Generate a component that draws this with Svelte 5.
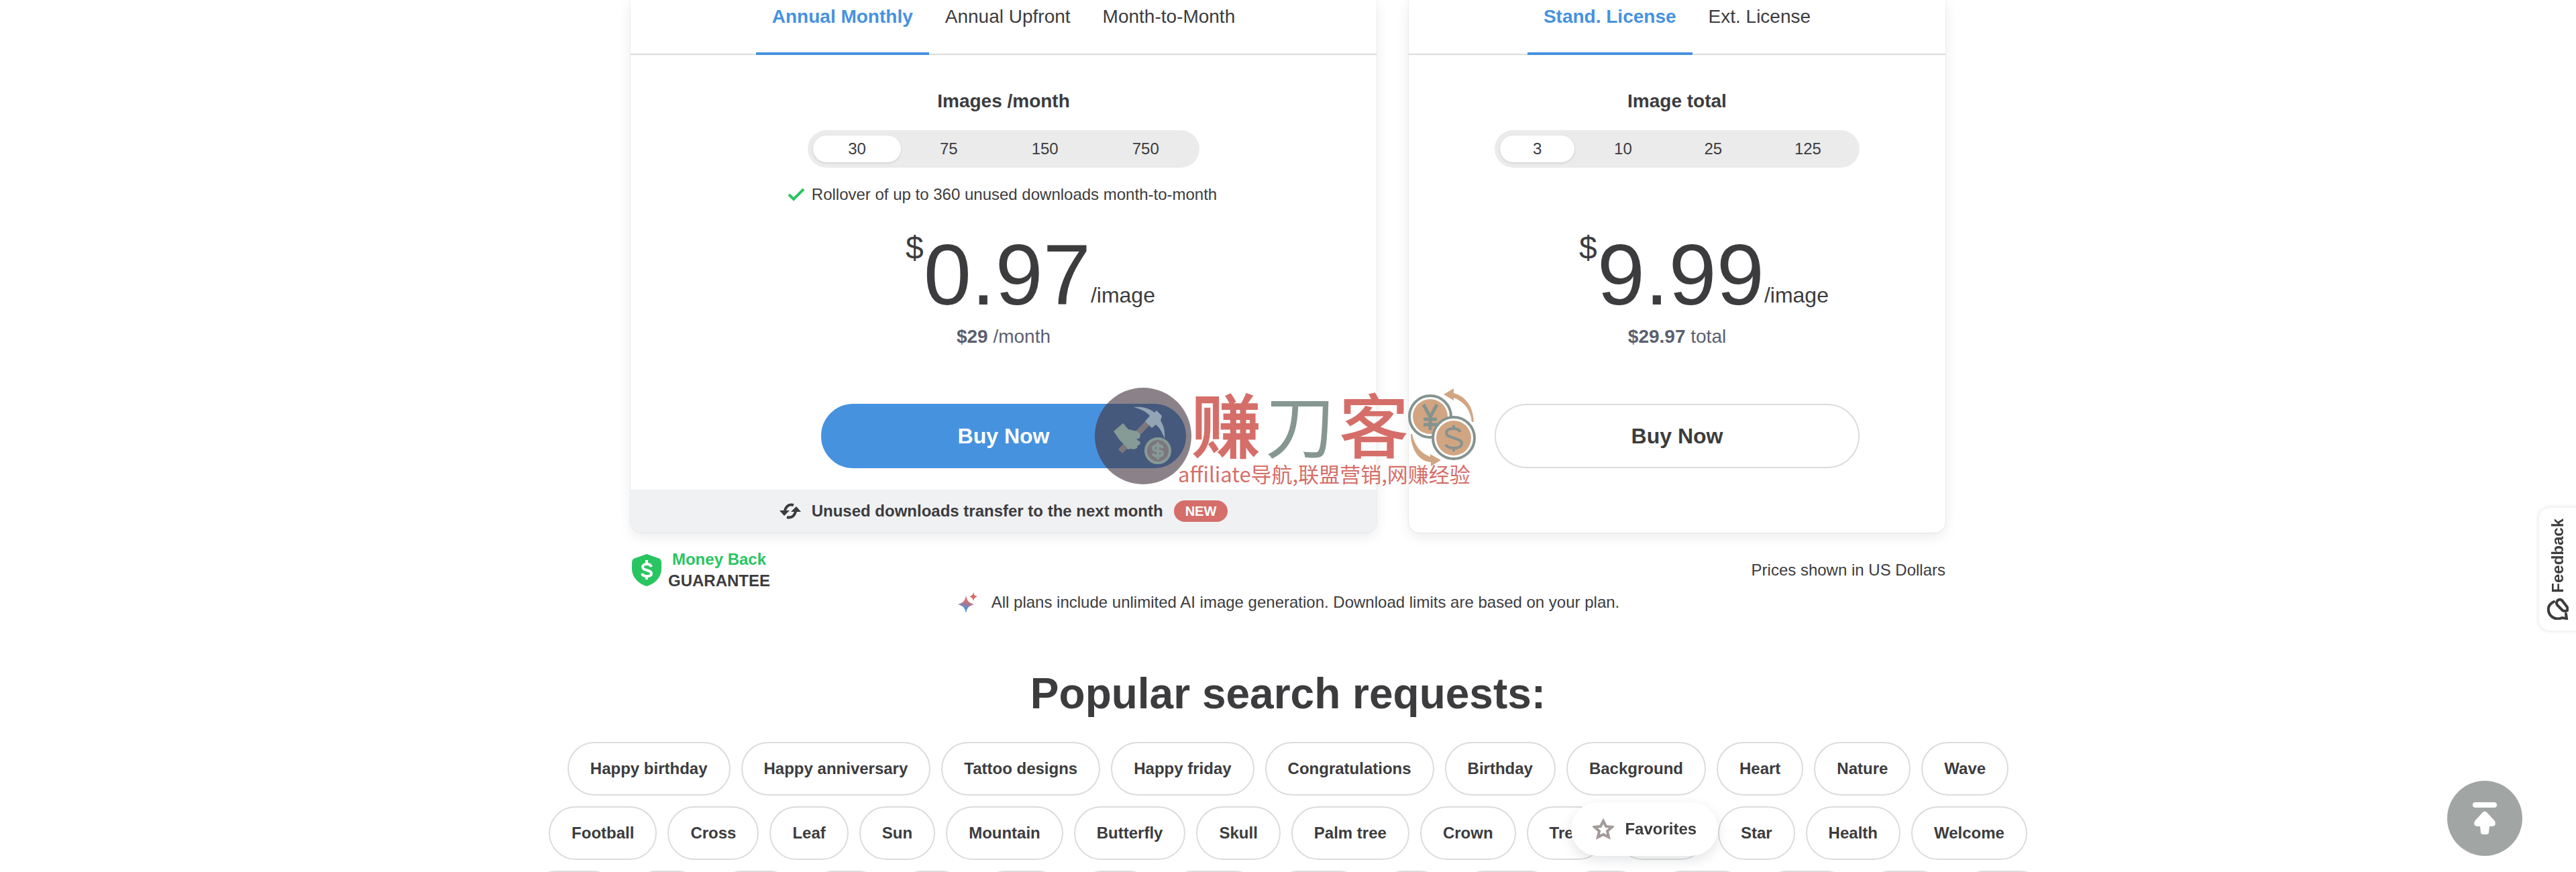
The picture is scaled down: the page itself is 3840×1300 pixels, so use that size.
<script>
  let plans = [
    {
      id: "monthly",
      tabs: ["Annual Monthly", "Annual Upfront", "Month-to-Month"],
      title: "Images /month",
      options: ["30", "75", "150", "750"],
      note: "Rollover of up to 360 unused downloads month-to-month",
      price: "0.97",
      total: "$29",
      totalUnit: "/month",
      transfer: true,
      primary: true,
    },
    {
      id: "license",
      tabs: ["Stand. License", "Ext. License"],
      title: "Image total",
      options: ["3", "10", "25", "125"],
      note: "",
      price: "9.99",
      total: "$29.97",
      totalUnit: "total",
      transfer: false,
      primary: false,
    },
  ];

  let activeTab = { monthly: 0, license: 0 };
  let selected = { monthly: "30", license: "3" };

  // a number is a placeholder chip of that width
  let searches = [
    [
      "Happy birthday",
      "Happy anniversary",
      "Tattoo designs",
      "Happy friday",
      "Congratulations",
      "Birthday",
      "Background",
      "Heart",
      "Nature",
      "Wave",
    ],
    [
      "Football",
      "Cross",
      "Leaf",
      "Sun",
      "Mountain",
      "Butterfly",
      "Skull",
      "Palm tree",
      "Crown",
      "Tree",
      136,
      "Star",
      "Health",
      "Welcome",
    ],
    [134, 111, 121, 116, 108, 128, 120, 141, 140, 105, 147, 116, 140, 138, 124, 133],
  ];

  function scrollTop() {
    window.scrollTo({ top: 0, behavior: "smooth" });
  }
</script>

<main>
  <section class="pricing">
    <div class="plans">
      {#each plans as plan}
        <article class="plan">
          <div class="tabs" role="tablist">
            {#each plan.tabs as tab, i}
              <button
                class="tab"
                class:active={activeTab[plan.id] === i}
                role="tab"
                aria-selected={activeTab[plan.id] === i}
                on:click={() => (activeTab[plan.id] = i)}>{tab}</button
              >
            {/each}
          </div>
          <h3>{plan.title}</h3>
          <div class="segment" class:compact={!plan.primary}>
            {#each plan.options as option}
              <label class:selected={selected[plan.id] === option}>
                <input
                  type="radio"
                  name={plan.id}
                  value={option}
                  bind:group={selected[plan.id]}
                />{option}
              </label>
            {/each}
          </div>
          <div class="note">
            {#if plan.note}
              <svg width="26" height="20" viewBox="0 0 26 20" fill="none">
                <path d="M2 10l7 7L24 2" stroke="#29c561" stroke-width="4" />
              </svg>
              <span>{plan.note}</span>
            {/if}
          </div>
          <div class="price">
            <span class="currency">$</span><span class="amount">{plan.price}</span
            ><span class="unit">/image</span>
          </div>
          <div class="total"><b>{plan.total}</b> {plan.totalUnit}</div>
          <button class="buy" class:primary={plan.primary}>Buy Now</button>
          {#if plan.transfer}
            <div class="transfer">
              <svg width="32" height="24" viewBox="0 0 32 24" fill="none">
                <path
                  d="M21 3C13 1 9 6 8 12M11 21c8 2 12-3 13-9"
                  stroke="#3c3c3e"
                  stroke-width="4"
                />
                <path d="M0 11h15l-8 8zM17 13h15l-7-8z" fill="#3c3c3e" />
              </svg>
              <span>Unused downloads transfer to the next month</span>
              <span class="badge">NEW</span>
            </div>
          {/if}
        </article>
      {/each}
    </div>

    <div class="info">
      <div class="guarantee">
        <svg width="48" height="48" viewBox="0 0 48 48" fill="none">
          <path
            d="M24 0l17 6q5 1 5 7v9c0 12-9 22-22 26C11 44 2 34 2 22v-9q0-6 5-7z"
            fill="#29c561"
          />
          <path
            d="M31 19c-1-3-4-4-7-4-4 0-6 2-6 4 0 3 2 4 6 5s7 2 7 5-3 4-7 4-6-1-7-4M24 9v6M24 33v5"
            stroke="#fff"
            stroke-width="4"
          />
        </svg>
        <div>
          <span class="green">Money Back</span>
          <span>GUARANTEE</span>
        </div>
      </div>
      <span>Prices shown in US Dollars</span>
    </div>
    <p class="ai">
      <svg width="32" height="32" viewBox="0 0 32 32">
        <defs>
          <linearGradient id="spark" x1="0.6" y1="0" x2="0.4" y2="1">
            <stop offset="0.3" stop-color="#d56e6b" />
            <stop offset="0.8" stop-color="#4692df" />
          </linearGradient>
        </defs>
        <path d="M14 6c2 9 4 10 12 13-8 3-10 4-12 13-2-9-4-10-12-13 8-3 10-4 12-13z" fill="url(#spark)" />
        <path d="M25 1c1 4 2 5 6 6-4 2-5 3-6 7-1-4-2-5-6-7 4-1 5-2 6-6z" fill="#d56e6b" />
      </svg>
      <span
        >All plans include unlimited AI image generation. Download limits are
        based on your plan.</span
      >
    </p>

    <div class="watermark">
      <svg width="144" height="144" viewBox="0 0 144 144" fill="none">
        <circle cx="72" cy="72" r="72" fill="#453744" fill-opacity="0.63" />
        <path d="M38 95L88 43" stroke="#7d767c" stroke-width="9" />
        <path
          d="M58 29c13-1 22 1 31 8l3-3 8 8-2 7c5 8 7 17 6 27-3-9-7-16-13-21l-6 5-10-10 7-8c-6-7-14-10-24-13z"
          fill="#93a4b4"
        />
        <path
          d="M28 65l14-12 8 9 13 3 5 5-1 5-5 2 6 4-1 4-3 1-1 4-5 2-4-1-5 1-3-5-9-9z"
          fill="#869a96"
        />
        <circle cx="94" cy="94" r="18" fill="#7d767c" stroke="#869a96" stroke-width="4" />
        <path
          d="M101 90c-1-3-4-4-7-4s-7 1-7 4 3 4 7 4 7 1 7 4-3 4-7 4-7-1-7-4M94 81v26"
          stroke="#869a96"
          stroke-width="4"
        />
      </svg>
      <div class="words">
        <div class="brand">
          <div class="name"><b>赚</b><i>刀</i><span>客</span></div>
          <svg width="106" height="120" viewBox="0 0 106 120" fill="none">
            <circle cx="36" cy="43" r="31" fill="#fff" stroke="#84938f" stroke-width="4" />
            <circle cx="36" cy="43" r="26" fill="#d2a582" />
            <path
              d="M26 25l10 19 10-19M36 43v20M26 47h20M26 55h20"
              stroke="#84938f"
              stroke-width="5"
            />
            <circle cx="71" cy="75" r="31" fill="#fff" stroke="#84938f" stroke-width="4" />
            <circle cx="71" cy="75" r="26" fill="#d2a582" />
            <path
              d="M81 66c-2-4-6-5-10-5-6 0-11 2-11 6 0 5 5 6 11 8s12 3 12 8-6 7-12 7-10-2-12-5M71 56v5M71 90v5"
              stroke="#84938f"
              stroke-width="4"
            />
            <path d="M56 10L71 1v7c18 5 29 20 30 43h-3C96 33 87 21 71 15v4z" fill="#d2a582" />
            <path d="M7 69h2c4 18 13 29 27 34v-4l16 9-15 9v-6C18 110 7 90 7 69z" fill="#d2a582" />
          </svg>
        </div>
        <div class="slogan">affiliate导航,联盟营销,网赚经验</div>
      </div>
    </div>
  </section>

  <section class="popular">
    <h2>Popular search requests:</h2>
    {#each searches as row}
      <div class="row">
        {#each row as item}
          {#if typeof item === "number"}
            <span class="chip" style="width: {item}px"></span>
          {:else}
            <a class="chip" href="#search">{item}</a>
          {/if}
        {/each}
      </div>
    {/each}
  </section>

  <button class="favorites">
    <svg width="32" height="32" viewBox="0 0 32 32" fill="none">
      <path
        d="M16 4l4 8 9 1-7 6 2 9-8-4-8 4 2-9-7-6 9-1z"
        stroke="#a29a99"
        stroke-width="4"
      />
    </svg>
    Favorites
  </button>

  <button class="feedback">
    <span>Feedback</span>
    <svg width="32" height="32" viewBox="0 0 32 32" fill="none">
      <path
        d="M10 5C4 8 1 13 2 19c2 9 11 14 20 10l7 1-1-7"
        stroke="#3c3c3e"
        stroke-width="4"
        stroke-linecap="round"
      />
      <path
        d="M15 4q3-4 7-1l7 9q2 2 1 6-3 2-7 0l-8-8q-2-3 0-6z"
        stroke="#3c3c3e"
        stroke-width="4"
      />
    </svg>
  </button>

  <button class="to-top" aria-label="Back to top" on:click={scrollTop}>
    <svg width="36" height="48" viewBox="0 0 36 48" fill="#fff">
      <rect width="36" height="8" rx="4" />
      <path d="M15 15q3-3 6 0l12 13q3 7-4 8h-4l-1 9q0 3-4 3h-4q-4 0-4-3l-1-9H7q-7-1-4-8z" />
    </svg>
  </button>
</main>

<style>
  :global(body) {
    background: #fff;
  }
  main {
    height: 100vh;
    overflow: hidden;
    color: #3c3c3e;
    font-family: "Liberation Sans", Arial, sans-serif;
    font-size: 24px;
    line-height: 32px;
  }
  button {
    font: inherit;
    color: inherit;
    background: none;
    border: none;
    padding: 0;
    cursor: pointer;
  }
  svg {
    flex: none;
  }
  .pricing {
    position: relative;
    max-width: 1960px;
    margin: 0 auto;
  }
  .plans {
    display: grid;
    grid-template-columns: 1112fr 800fr;
    gap: 48px;
  }
  .plan {
    display: flex;
    flex-direction: column;
    align-items: center;
    overflow: hidden;
    background: #fff;
    border-radius: 0 0 16px 16px;
    box-shadow:
      0 0 2px rgba(60, 64, 80, 0.2),
      0 6px 18px rgba(60, 64, 80, 0.1);
  }
  .tabs {
    align-self: stretch;
    display: flex;
    justify-content: center;
    border-bottom: 2px solid #dcdcdc;
  }
  .tab {
    margin-bottom: -2px;
    padding: 9px 24px 37px;
    border-bottom: 4px solid transparent;
    font-size: 28px;
  }
  .tab.active {
    color: #4692df;
    border-color: #4692df;
    font-weight: bold;
  }
  h3 {
    margin: 53px 0 27px;
    font-size: 28px;
  }
  .segment {
    display: flex;
    gap: 6px;
    padding: 8px;
    border-radius: 28px;
    background: #ebebeb;
  }
  .segment label {
    padding: 0 52px;
    border-radius: 20px;
    line-height: 40px;
    cursor: pointer;
  }
  .segment.compact {
    box-sizing: border-box;
    width: 544px;
    justify-content: space-between;
  }
  .segment.compact label {
    padding: 0 49px;
  }
  .segment label.selected {
    background: #fff;
    box-shadow: 0 1px 3px rgba(0, 0, 0, 0.15);
  }
  .segment input {
    position: absolute;
    opacity: 0;
    pointer-events: none;
  }
  .note {
    display: flex;
    align-items: center;
    gap: 10px;
    min-height: 28px;
    margin: 26px 4px 0 0;
    line-height: 28px;
  }
  .price {
    display: flex;
    align-items: flex-start;
    margin: 42px 0 12px 80px;
  }
  .currency {
    font-size: 48px;
    line-height: 48px;
  }
  .amount {
    font-size: 128px;
    line-height: 128px;
  }
  .unit {
    align-self: flex-end;
    margin-bottom: 16px;
    font-size: 32px;
    line-height: 36px;
  }
  .total {
    color: #5b5f6f;
    font-size: 28px;
  }
  .buy {
    box-sizing: border-box;
    width: 544px;
    height: 96px;
    margin: 84px 0 32px;
    border: 2px solid #dcdcdc;
    border-radius: 48px;
    font-size: 32px;
    font-weight: bold;
  }
  .buy.primary {
    color: #fff;
    background: #4692df;
    border-color: #4692df;
  }
  .transfer {
    align-self: stretch;
    display: flex;
    justify-content: center;
    align-items: center;
    gap: 16px;
    height: 64px;
    background: #f0f1f3;
    font-weight: bold;
  }
  .badge {
    padding: 0 17px;
    border-radius: 16px;
    background: #d56e6b;
    color: #fff;
    font-size: 20px;
  }
  .info {
    display: flex;
    justify-content: space-between;
    align-items: center;
    padding-top: 24px;
  }
  .guarantee {
    display: flex;
    align-items: center;
    gap: 8px;
    font-weight: bold;
    text-align: center;
  }
  .guarantee span {
    display: block;
  }
  .green {
    color: #29c561;
  }
  .ai {
    display: flex;
    justify-content: center;
    gap: 20px;
    margin: 0;
  }
  .watermark {
    position: absolute;
    left: 692px;
    top: 578px;
    display: flex;
    pointer-events: none;
    color: #d56e69;
    font-family: "Noto Sans CJK SC", sans-serif;
  }
  .words {
    margin-left: -20px;
  }
  .brand {
    display: flex;
    height: 110px;
    padding-left: 20px;
  }
  .name {
    display: flex;
    gap: 6px;
    font-size: 104px;
    font-weight: 500;
    line-height: 104px;
  }
  .name i {
    color: #869792;
    font-style: normal;
    font-weight: 400;
  }
  .brand svg {
    margin-left: -4px;
  }
  .slogan {
    font-size: 31px;
    line-height: 36px;
  }
  h2 {
    margin: 84px 0 36px;
    font-size: 64px;
    line-height: 72px;
    text-align: center;
  }
  .row {
    display: flex;
    justify-content: center;
    gap: 16px;
    margin-bottom: 16px;
  }
  .chip {
    box-sizing: border-box;
    flex: none;
    height: 80px;
    padding: 0 32px;
    border: 2px solid #dcdcdc;
    border-radius: 40px;
    color: inherit;
    font-weight: bold;
    line-height: 76px;
    text-decoration: none;
  }
  .favorites {
    position: fixed;
    left: 61%;
    bottom: 24px;
    display: flex;
    align-items: center;
    gap: 16px;
    height: 80px;
    padding: 0 32px;
    border-radius: 40px;
    background: #fff;
    box-shadow: 0 6px 18px rgba(60, 64, 80, 0.14);
    font-weight: bold;
  }
  .feedback {
    position: fixed;
    right: 0;
    bottom: 360px;
    display: flex;
    flex-direction: column;
    align-items: center;
    gap: 8px;
    padding: 16px 11px 16px 12px;
    border-radius: 16px 0 0 16px;
    background: #fff;
    box-shadow: 0 0 4px 3px #f1f2f4;
    font-weight: bold;
  }
  .feedback span {
    writing-mode: vertical-rl;
    transform: rotate(180deg);
  }
  .to-top {
    position: fixed;
    right: 80px;
    bottom: 24px;
    display: flex;
    justify-content: center;
    align-items: center;
    width: 112px;
    height: 112px;
    border-radius: 50%;
    background: #a1a5a3;
  }
</style>
